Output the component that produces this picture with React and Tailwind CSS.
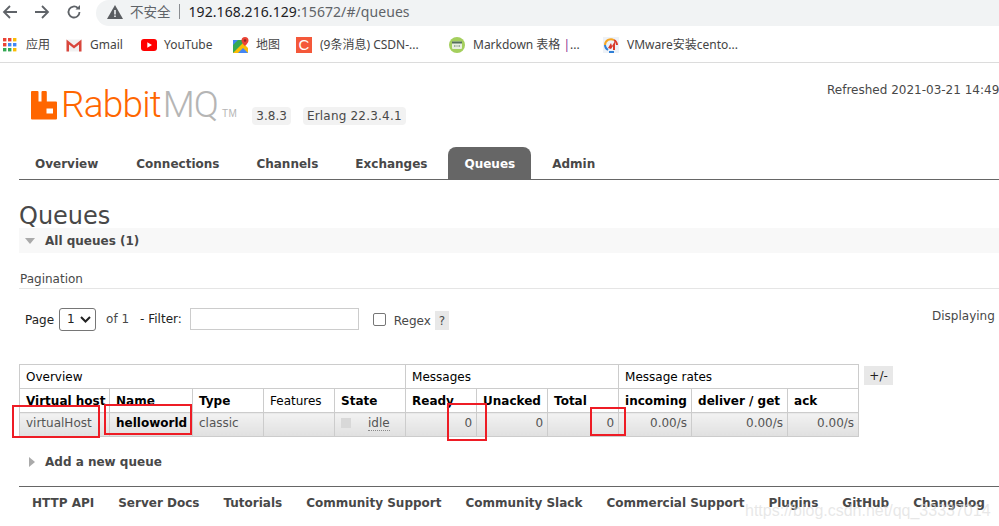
import React from "react";

const verdana = "font-['DejaVu_Sans',Verdana,sans-serif]";

function Bookmark({ icon, label, className, gap = "gap-[8px]" }) {
  return (
    <div className={`flex items-center ${gap} ${className}`}>
      <span className="flex h-4 w-4 shrink-0 items-center justify-center">{icon}</span>
      <span className="whitespace-nowrap text-[12px] text-[#444]">{label}</span>
    </div>
  );
}

const AppsIcon = (
  <svg width="16" height="16" viewBox="0 0 16 16">
    {[["#ea4335", "#ea4335", "#fbbc04"], ["#ea4335", "#4285f4", "#4285f4"], ["#34a853", "#34a853", "#fbbc04"]].map((r, y) =>
      r.map((c, x) => <rect key={`${x}${y}`} x={1 + x * 5} y={1 + y * 5} width="3.4" height="3.4" fill={c} />)
    )}
  </svg>
);
const GmailIcon = (
  <svg width="16" height="14" viewBox="0 0 16 14">
    <path d="M0.5 1.5h15v12h-15z" fill="#f1f1f1" />
    <path d="M0.5 13.5v-12l7.5 6 7.5-6v12h-2.5v-7l-5 4-5-4v7z" fill="#d9463c" />
  </svg>
);
const YouTubeIcon = (
  <svg width="16" height="12" viewBox="0 0 16 12">
    <rect width="16" height="12" rx="3" fill="#f00" />
    <path d="M6.3 3.2 11 6l-4.700 2.800z" fill="#fff" />
  </svg>
);
const MapsIcon = (
  <svg width="16" height="16" viewBox="0 0 16 16">
    <path d="M0 3h10v13H0z" fill="#34a853" />
    <path d="M0 16 10 6l5 5v5z" fill="#fbbc04" />
    <path d="M0 3h5L0 8z" fill="#4285f4" />
    <path d="M5 16l5-5 5 5z" fill="#4285f4" />
    <path d="M12 0a3.500 3.500 0 0 1 3.500 3.500C15.500 6 12 9 12 9S8.500 6 8.500 3.500A3.500 3.500 0 0 1 12 0z" fill="#ea4335" />
    <circle cx="12" cy="3.500" r="1.200" fill="#8c2a22" />
  </svg>
);
const CsdnIcon = (
  <span className="flex h-4 w-4 items-center justify-center bg-[#f4583a] font-['Liberation_Sans',sans-serif] text-[15px] leading-none text-white">C</span>
);
const MarkdownIcon = (
  <svg width="16" height="16" viewBox="0 0 16 16">
    <circle cx="8" cy="8" r="8" fill="#a4cf5d" />
    <rect x="3" y="4.500" width="10" height="7.500" rx="1" fill="#e9efe0" />
    <rect x="3" y="4.500" width="10" height="2" fill="#55705a" />
    <path d="M5 9h1.500M7.500 9h1M9.500 9H11" stroke="#55705a" strokeWidth="1" />
  </svg>
);
const VmwareIcon = (
  <svg width="16" height="16" viewBox="0 0 16 16">
    <rect width="16" height="16" fill="#eef2f7" />
    <path d="M2 8a6 6 0 0 1 9-5" fill="none" stroke="#f5a623" strokeWidth="2" />
    <path d="M2 8a6 6 0 0 0 3 5" fill="none" stroke="#2f7fd6" strokeWidth="2" />
    <path d="M11 3a6 6 0 0 1 3 5" fill="none" stroke="#d93a2b" strokeWidth="2" />
    <path d="M5 11 8 6l1 3 3-5v9h-2V9l-2 3z" fill="#d93a2b" />
    <path d="M6 15h5" stroke="#2f7fd6" strokeWidth="2" />
  </svg>
);

function RabbitLogo() {
  return (
    <svg width="26" height="29" viewBox="0 0 26 29" className="shrink-0">
      <path
        fillRule="evenodd"
        d="M0 1a1 1 0 0 1 1-1h5.500a1 1 0 0 1 1 1v9.500h3V1a1 1 0 0 1 1-1h3.300a1 1 0 0 1 1 1v9.500h9.200a1 1 0 0 1 1 1V27.500a1 1 0 0 1-1 1H1a1 1 0 0 1-1-1zM15.500 17.500v5H22v-5z"
        fill="#ff6600"
      />
    </svg>
  );
}

const tabs = ["Overview", "Connections", "Channels", "Exchanges", "Queues", "Admin"];
const footer = [
  "HTTP API",
  "Server Docs",
  "Tutorials",
  "Community Support",
  "Community Slack",
  "Commercial Support",
  "Plugins",
  "GitHub",
  "Changelog",
];

const cols = [90, 83, 71, 71, 71, 71, 71, 71, 73, 96, 71];
const th = "border border-[#ccc] px-[6px] text-left font-bold text-black h-6 whitespace-nowrap overflow-hidden";
const td = "border border-[#ccc] pl-[6px] pr-[4px] pb-[4px] h-6 whitespace-nowrap text-[#555] bg-gradient-to-b from-[#f2f2f2] to-[#e0e0e0]";

function Mark({ className }) {
  return <div className={`pointer-events-none absolute border-[2px] border-[#ee1c25] ${className}`} />;
}

export default function App() {
  return (
    <div className={`relative h-[526px] w-[999px] overflow-hidden bg-white ${verdana} text-[12px] text-[#484848]`}>
      {/* browser toolbar */}
      <div className="flex h-[26px] items-center font-['Noto_Sans','Noto_Sans_CJK_SC',sans-serif]">
        <div className="flex w-[96px] shrink-0 items-center gap-[16px] pb-[2px] pl-[2px] text-[#5f6368]">
          <svg width="16" height="16" viewBox="0 0 16 16" fill="none" stroke="currentColor" strokeWidth="1.800">
            <path d="M15 8H2M8 2 2 8l6 6" />
          </svg>
          <svg width="16" height="16" viewBox="0 0 16 16" fill="none" stroke="currentColor" strokeWidth="1.800">
            <path d="M1 8h13M8 2l6 6-6 6" />
          </svg>
          <svg width="16" height="16" viewBox="0 0 16 16" fill="none" stroke="currentColor" strokeWidth="1.800">
            <path d="M13.500 8A5.500 5.500 0 1 1 11.800 4" />
            <path d="M14 1v4.500H9.500z" fill="currentColor" stroke="none" />
          </svg>
        </div>
        <div className="flex h-full flex-1 items-center rounded-l-[13px] bg-[#f1f3f4] pb-[3px] pl-[11px]">
          <svg width="16" height="14" viewBox="0 0 16 14" className="shrink-0">
            <path d="M8 0 16 14H0z" fill="#5a5d61" />
            <path d="M7.200 5h1.600v4.500H7.200zM7.200 10.500h1.600V12H7.200z" fill="#f1f3f4" />
          </svg>
          <span className="ml-[7px] font-['Noto_Sans_CJK_SC',sans-serif] text-[13.500px] text-[#5f6368]">不安全</span>
          <span className="ml-[8px] h-[15px] w-px bg-[#8a8d91]" />
          <span className="ml-[9px] text-[14px] tracking-[0.07px] text-[#202124]">
            192.168.216.129<span className="text-[#5f6368]">:15672/#/queues</span>
          </span>
        </div>
      </div>

      {/* bookmarks */}
      <div className="flex h-[37px] items-center border-b border-[#dcdcdc] pl-[2px] pt-[1px] font-['Noto_Sans','Noto_Sans_CJK_SC',sans-serif]">
        <Bookmark icon={AppsIcon} label="应用" className="w-[64px]" />
        <Bookmark icon={GmailIcon} label="Gmail" className="w-[75px]" />
        <Bookmark icon={YouTubeIcon} label="YouTube" className="w-[92px]" gap="gap-[7px]" />
        <Bookmark icon={MapsIcon} label="地图" className="w-[63px]" gap="gap-[7px]" />
        <Bookmark icon={CsdnIcon} label="(9条消息) CSDN-..." className="w-[153px]" />
        <Bookmark
          icon={MarkdownIcon}
          label={<>Markdown 表格 <span className="text-[#8a2d8f]">|</span>...</>}
          className="w-[154px]"
        />
        <Bookmark icon={VmwareIcon} label="VMware安装cento..." />
      </div>

      {/* rabbit header */}
      <div className="relative flex h-[84px] items-start pl-[31px] pt-[28px]">
        <RabbitLogo />
        <span className="ml-[4px] mt-[-5px] font-['Roboto',sans-serif] text-[37px] font-light leading-[38px] tracking-[-0.8px] text-[#ff6600]">
          Rabbit
        </span>
        <span className="ml-[2px] mt-[-5px] font-['Roboto',sans-serif] text-[37px] font-light leading-[38px] tracking-[-1px] text-[#b5b5b5]">
          MQ
        </span>
        <span className="ml-[4px] mt-[18px] font-['Liberation_Sans',sans-serif] text-[10px] leading-[10px] tracking-[0.5px] text-[#b5b5b5]">TM</span>
        <span className="ml-[15px] mt-[16px] rounded-[4px] bg-[#f2f2f2] px-[4px] py-[2px] leading-[14px]">3.8.3</span>
        <span className="ml-[12px] mt-[16px] rounded-[4px] bg-[#f2f2f2] px-[4px] py-[2px] leading-[14px] tracking-[0.2px]">Erlang 22.3.4.1</span>
        <span className="absolute left-[827px] top-[18px] whitespace-nowrap">Refreshed 2021-03-21 14:49:16</span>
      </div>

      {/* tabs */}
      <div className="ml-[19px] flex h-[33px] w-[1100px] items-end gap-[5px] border-b border-[#666]">
        {tabs.map((t, i) => (
          <div
            key={t}
            className={`flex h-[32px] items-center whitespace-nowrap pl-[16px] pt-[2px] font-bold ${i === 0 ? "pr-[17px]" : "pr-[16px]"} ${
              t === "Queues" ? "rounded-t-[8px] bg-[#666] text-white" : "text-[#484848]"
            }`}
          >
            {t}
          </div>
        ))}
      </div>

      {/* content */}
      <div className="ml-[19px] w-[1100px]">
        <h1 className="mt-[20px] h-[28px] text-[24px] leading-[32px] text-[#484848]">Queues</h1>
        <div className="flex h-[25px] items-center bg-[#f8f8f8] pl-[6px] font-bold">
          <span className="mr-[10px] h-0 w-0 border-x-[5px] border-t-[6px] border-x-transparent border-t-[#aaa]" />
          All queues (1)
        </div>
        <div className="mt-[18px] h-[18px] border-b border-[#e5e5e5] pl-[1px] leading-[17px]">Pagination</div>

        <div className="relative mt-[18px] flex h-[24px] items-center pl-[6px]">
          <span className="mt-[2px] text-[#222]">Page</span>
          <div className="ml-[5px] flex h-[23px] w-[37px] items-center justify-between rounded-[3px] border border-[#767676] bg-white pl-[7px] pr-[4px] text-[#222]">
            1
            <svg width="11" height="7" viewBox="0 0 11 7" fill="none" stroke="#222" strokeWidth="2">
              <path d="M1 1l4.500 4.500L10 1" />
            </svg>
          </div>
          <span className="ml-[10px]">of 1</span>
          <span className="ml-[11px] text-[#222]">- Filter:</span>
          <div className="ml-[8px] h-[22px] w-[169px] border border-[#ccc] bg-white" />
          <span className="ml-[14px] h-[13px] w-[13px] rounded-[2px] border border-[#767676] bg-white" />
          <span className="ml-[8px] mt-[3px]">Regex</span>
          <span className="ml-[4px] mt-[3px] flex h-[19px] w-[14px] items-center justify-center bg-[#e8e8e8]">?</span>
          <span className="absolute left-[913px] top-0 whitespace-nowrap">Displaying 1 item</span>
        </div>

        {/* table */}
        <div className="mt-[33px] flex items-start">
          <table className="w-[840px] table-fixed border-collapse text-[12px]">
            <colgroup>
              {cols.map((w, i) => (
                <col key={i} width={w} />
              ))}
            </colgroup>
            <thead>
              <tr>
                <th colSpan={5} className={`${th} font-normal text-[#484848]`}>Overview</th>
                <th colSpan={3} className={`${th} font-normal text-[#484848]`}>Messages</th>
                <th colSpan={3} className={`${th} font-normal text-[#484848]`}>Message rates</th>
              </tr>
              <tr>
                <th className={th}>Virtual host</th>
                <th className={th}>Name</th>
                <th className={th}>Type</th>
                <th className={`${th} font-normal text-[#484848]`}>Features</th>
                <th className={th}>State</th>
                <th className={th}>Ready</th>
                <th className={th}>Unacked</th>
                <th className={th}>Total</th>
                <th className={th}>incoming</th>
                <th className={th}>deliver / get</th>
                <th className={th}>ack</th>
              </tr>
            </thead>
            <tbody>
              <tr>
                <td className={td}>virtualHost</td>
                <td className={`${td} font-bold text-black`}>helloworld</td>
                <td className={td}>classic</td>
                <td className={td}></td>
                <td className={td}>
                  <div className="flex items-center">
                    <span className="h-[10px] w-[10px] bg-[#d8d8d8]" />
                    <span className="ml-[17px] mt-[2px] border-b border-dotted border-[#888] leading-[14px]">idle</span>
                  </div>
                </td>
                <td className={`${td} text-right`}>0</td>
                <td className={`${td} text-right`}>0</td>
                <td className={`${td} text-right`}>0</td>
                <td className={`${td} text-right`}>0.00/s</td>
                <td className={`${td} text-right`}>0.00/s</td>
                <td className={`${td} text-right`}>0.00/s</td>
              </tr>
            </tbody>
          </table>
          <span className="ml-[5px] mt-[2px] flex h-[19px] w-[29px] items-center justify-center bg-[#e8e8e8] text-[#222]">+/-</span>
        </div>

        <div className="mt-[17px] flex h-[16px] items-center pl-[10px] font-bold">
          <span className="mr-[10px] h-0 w-0 border-y-[5px] border-l-[6px] border-y-transparent border-l-[#aaa]" />
          Add a new queue
        </div>

        <div className="mt-[16px] flex h-[32px] items-center gap-[24px] border-t border-[#666] pl-[13px] font-bold">
          {footer.map((f) => (
            <span key={f} className="whitespace-nowrap">{f}</span>
          ))}
        </div>
      </div>

      {/* annotation marks and watermark */}
      <Mark className="left-[12px] top-[405px] h-[33px] w-[88px]" />
      <Mark className="left-[104px] top-[404px] h-[31px] w-[88px]" />
      <Mark className="left-[447px] top-[403px] h-[38px] w-[40px]" />
      <Mark className="left-[590px] top-[407px] h-[29px] w-[36px]" />
      <span className="absolute left-[745px] top-[499px] whitespace-nowrap font-['Liberation_Sans',sans-serif] text-[16px] text-[#d8d8d8]/60">
        https://blog.csdn.net/qq_33337014
      </span>
    </div>
  );
}
